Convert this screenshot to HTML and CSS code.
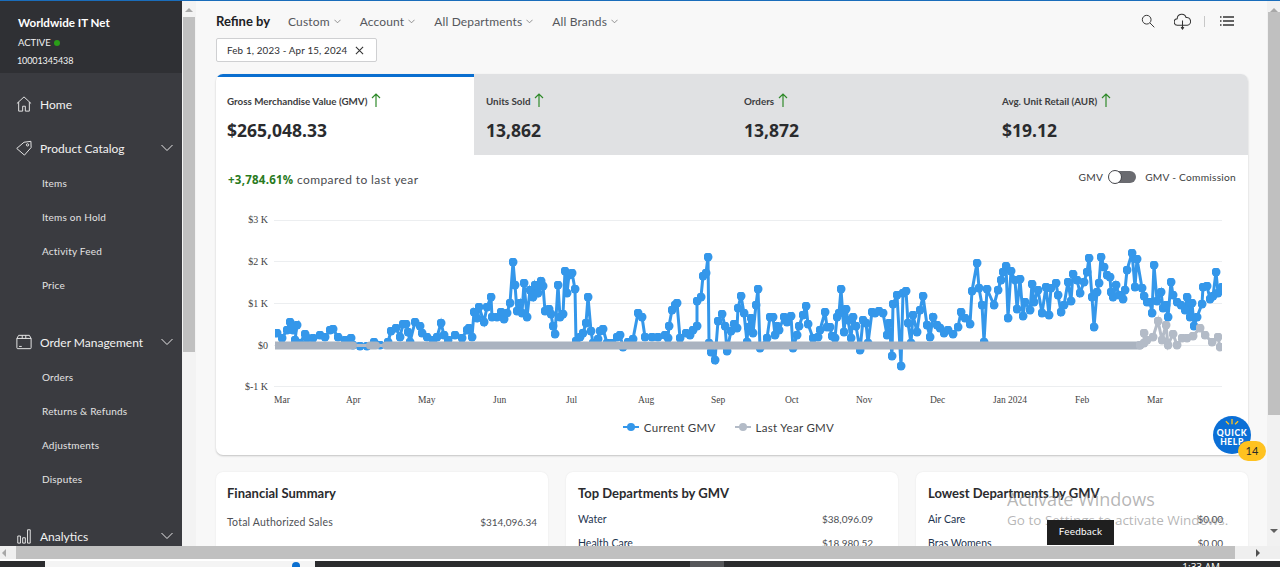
FILE: index.html
```html
<!DOCTYPE html>
<html lang="en">
<head>
<meta charset="utf-8">
<title>Seller Center Analytics</title>
<link rel="stylesheet" href="styles.css">
</head>
<body>
<div class="window">
  <aside class="sidebar">
    <header class="account">
      <div class="account-name">Worldwide IT Net</div>
      <div class="account-status">ACTIVE <span class="status-dot"></span></div>
      <div class="account-id">10001345438</div>
    </header>
    <nav class="nav">
      <a class="nav-main nav-home">
        <svg class="nav-icon" viewBox="0 0 18 18"><path d="M1 8.500 9 1l8 7.500M3 6.800V17h4.500v-5.500h3V17H15V6.800"/></svg>
        <span>Home</span>
      </a>
      <a class="nav-main">
        <svg class="nav-icon" viewBox="0 0 18 18"><path d="M.8 9.500 9 2.500l7.800-1 .2 7-7.500 8.500z"/><circle cx="13" cy="5.500" r="1.300"/></svg>
        <span>Product Catalog</span>
        <svg class="nav-chev" viewBox="0 0 12 8"><path d="M.5 1 6 6.500 11.500 1"/></svg>
      </a>
      <a class="nav-sub">Items</a>
      <a class="nav-sub">Items on Hold</a>
      <a class="nav-sub">Activity Feed</a>
      <a class="nav-sub">Price</a>
      <a class="nav-main nav-group">
        <svg class="nav-icon" viewBox="0 0 18 18"><path d="M3 1.500h12l2 3.500v10.500a1 1 0 0 1-1 1H2a1 1 0 0 1-1-1V5zM1 5h16M7 1.500V5M11 1.500V5M3.500 14h3"/></svg>
        <span>Order Management</span>
        <svg class="nav-chev" viewBox="0 0 12 8"><path d="M.5 1 6 6.500 11.500 1"/></svg>
      </a>
      <a class="nav-sub">Orders</a>
      <a class="nav-sub">Returns &amp; Refunds</a>
      <a class="nav-sub">Adjustments</a>
      <a class="nav-sub">Disputes</a>
      <a class="nav-main nav-group">
        <svg class="nav-icon" viewBox="0 0 18 18"><path d="M2 9h3v8H2zM7.500 11h3v6h-3zM13 2h3v15h-3z"/></svg>
        <span>Analytics</span>
        <svg class="nav-chev" viewBox="0 0 12 8"><path d="M.5 1 6 6.500 11.500 1"/></svg>
      </a>
    </nav>
  </aside>

  <div class="vbar vbar-side">
    <span class="arrow-up"></span>
    <div class="vthumb vthumb-side"></div>
  </div>

  <main class="main">
    <div class="topbar">
      <div class="filters">
        <strong class="refine">Refine by</strong>
        <span class="filter">Custom <svg class="mini-chev" viewBox="0 0 8 5"><path d="M.5.500 4 4 7.500.5"/></svg></span>
        <span class="filter">Account <svg class="mini-chev" viewBox="0 0 8 5"><path d="M.5.500 4 4 7.500.5"/></svg></span>
        <span class="filter">All Departments <svg class="mini-chev" viewBox="0 0 8 5"><path d="M.5.500 4 4 7.500.5"/></svg></span>
        <span class="filter">All Brands <svg class="mini-chev" viewBox="0 0 8 5"><path d="M.5.500 4 4 7.500.5"/></svg></span>
      </div>
      <div class="tools">
        <svg class="tool tool-search" viewBox="0 0 16 16"><circle cx="6.500" cy="6.500" r="5"/><path d="m10.200 10.200 5 5"/></svg>
        <svg class="tool tool-cloud" viewBox="0 0 18 18"><path d="M5 13H4a3.500 3.500 0 0 1-.6-7A4.800 4.800 0 0 1 12.800 4.800 4.100 4.100 0 0 1 14 13z"/><path d="M9 8v9M7.500 15 9 17l1.500-2"/></svg>
        <span class="tool-sep"></span>
        <svg class="tool tool-list" viewBox="0 0 14 10"><path d="M3 1h11M3 5h11M3 9h11M0 1h1.500M0 5h1.500M0 9h1.500"/></svg>
      </div>
    </div>

    <div class="chip"><span>Feb 1, 2023 - Apr 15, 2024</span>
      <svg class="chip-x" viewBox="0 0 10 10"><path d="m1 1 8 8M9 1 1 9"/></svg>
    </div>

    <section class="panel">
      <div class="tabs">
        <div class="tab tab-active">
          <div class="tab-label">Gross Merchandise Value (GMV) <svg class="up" viewBox="0 0 10 14"><path d="M5 14V1M1 5l4-4 4 4"/></svg></div>
          <div class="tab-value">$265,048.33</div>
        </div>
        <div class="tab">
          <div class="tab-label">Units Sold <svg class="up" viewBox="0 0 10 14"><path d="M5 14V1M1 5l4-4 4 4"/></svg></div>
          <div class="tab-value">13,862</div>
        </div>
        <div class="tab">
          <div class="tab-label">Orders <svg class="up" viewBox="0 0 10 14"><path d="M5 14V1M1 5l4-4 4 4"/></svg></div>
          <div class="tab-value">13,872</div>
        </div>
        <div class="tab">
          <div class="tab-label">Avg. Unit Retail (AUR) <svg class="up" viewBox="0 0 10 14"><path d="M5 14V1M1 5l4-4 4 4"/></svg></div>
          <div class="tab-value">$19.12</div>
        </div>
      </div>

      <div class="compare-row">
        <div class="compare"><b class="pct">+3,784.61%</b> compared to last year</div>
        <div class="switch-row">
          <span>GMV</span>
          <span class="switch"><span class="knob"></span></span>
          <span>GMV - Commission</span>
        </div>
      </div>

      <svg class="chart" viewBox="216 200 1032 215" width="1032" height="215">
        <defs>
          <marker id="dot" viewBox="0 0 9 9" refX="4.500" refY="4.500" markerWidth="9" markerHeight="9" markerUnits="userSpaceOnUse"><circle cx="4.500" cy="4.500" r="4.500" fill="#3497ea"/></marker>
          <marker id="dot-grey" viewBox="0 0 9 9" refX="4.500" refY="4.500" markerWidth="9" markerHeight="9" markerUnits="userSpaceOnUse"><circle cx="4.500" cy="4.500" r="4.500" fill="#b3bbc7"/></marker>
          <clipPath id="plot"><rect x="275" y="205" width="947" height="175"/></clipPath>
        </defs>
        <g class="grid">
          <path d="M274 220.500H1222M274 261.500H1222M274 303.500H1222M274 345.500H1222M274 386.500H1222"/>
        </g>
        <g class="y-labels">
          <text x="268" y="223">$3 K</text>
          <text x="268" y="265">$2 K</text>
          <text x="268" y="307">$1 K</text>
          <text x="268" y="349">$0</text>
          <text x="268" y="390">$-1 K</text>
        </g>
        <g class="x-labels">
          <text x="274" y="403">Mar</text><text x="346" y="403">Apr</text><text x="418" y="403">May</text><text x="493" y="403">Jun</text><text x="566" y="403">Jul</text><text x="638" y="403">Aug</text><text x="711" y="403">Sep</text><text x="785" y="403">Oct</text><text x="856" y="403">Nov</text><text x="930" y="403">Dec</text><text x="993" y="403">Jan 2024</text><text x="1075" y="403">Feb</text><text x="1147" y="403">Mar</text>
        </g>
        <g clip-path="url(#plot)">
          <polyline class="line-current" marker-start="url(#dot)" marker-mid="url(#dot)" marker-end="url(#dot)" points="275,333 277,333 282,338 287,330 290,322 293,330 297,325 295,340 300,343 305,334 307,338 313,338 320,335 325,337 330,330 333,329 338,337 345,340 351,338 353,345 360,346 367,346 374,342 380,345 388,342 391,331 396,328 400,337 403,324 406,324 408,332 410,342 415,322 420,326 422,333 427,337 433,340 437,337 441,323 444,335 448,340 455,335 462,338 467,330 469,328 472,337 474,312 477,318 479,307 484,322 487,307 491,297 492,317 497,317 501,312 504,319 507,313 510,303 513,262 515,285 517,311 520,303 522,313 524,283 527,317 530,290 533,297 535,285 538,293 541,281 543,286 545,311 549,309 551,314 553,326 555,334 558,285 560,317 563,314 565,271 567,293 569,275 572,273 575,289 576,341 580,337 583,333 586,323 588,297 591,331 593,343 598,339 600,331 603,329 607,343 612,343 617,337 620,335 623,347 628,342 633,339 638,313 642,317 645,337 652,337 658,337 665,335 668,338 669,326 672,310 675,305 677,303 680,338 686,333 690,335 693,330 697,326 697,301 701,297 703,276 706,273 708,257 709,343 711,352 715,360 718,321 722,314 725,326 727,351 731,331 734,324 737,328 738,308 741,296 744,313 747,342 748,327 751,318 753,333 756,305 758,289 760,348 767,338 770,317 773,317 775,335 777,326 779,330 784,317 787,322 791,316 793,348 797,335 799,326 803,315 806,306 808,324 813,338 818,337 820,330 825,312 827,327 830,327 832,336 835,338 837,317 839,313 841,289 844,332 846,309 848,320 851,338 853,317 856,326 860,350 863,320 866,323 868,343 872,312 875,313 879,311 883,313 887,335 889,323 892,356 893,304 897,295 901,366 903,293 906,291 908,323 911,343 913,315 917,332 920,310 923,296 927,325 930,337 933,317 937,325 940,328 944,333 948,330 953,334 958,327 961,312 965,318 970,324 972,291 977,263 979,288 982,305 984,342 987,289 994,305 998,290 1001,280 1003,272 1006,266 1008,318 1011,271 1015,280 1017,309 1020,279 1023,316 1025,302 1030,310 1032,284 1034,302 1038,290 1042,313 1046,287 1049,315 1051,288 1056,283 1058,295 1061,312 1064,305 1068,282 1071,301 1073,274 1077,280 1080,293 1084,282 1087,272 1089,258 1092,297 1094,327 1097,292 1099,283 1101,257 1104,267 1107,275 1110,277 1111,292 1113,297 1116,285 1119,295 1123,299 1125,290 1127,270 1132,253 1135,287 1137,259 1142,288 1144,296 1147,302 1150,302 1152,313 1154,265 1157,301 1161,292 1163,308 1166,305 1168,317 1171,282 1173,295 1177,302 1181,305 1185,310 1187,297 1190,317 1192,303 1194,326 1197,317 1202,304 1203,287 1207,286 1210,299 1213,296 1216,272 1218,293 1222,287"/>
          <path class="band-thin" d="M275 345.500H1140"/>
          <path class="band" d="M275 345.500H353M370 345.500H376M386 345.500H1140"/>
          <polyline class="line-last" marker-mid="url(#dot-grey)" marker-end="url(#dot-grey)" points="1138,345 1140,345 1144,343 1144,333 1147,340 1153,337 1158,321 1162,340 1166,325 1168,345 1173,334 1177,345 1182,338 1187,338 1193,336 1200,328 1205,335 1212,342 1218,337 1220,347"/>
        </g>
      </svg>

      <div class="legend">
        <span class="legend-item"><span class="swatch swatch-current"></span>Current GMV</span>
        <span class="legend-item"><span class="swatch swatch-last"></span>Last Year GMV</span>
      </div>
    </section>

    <div class="cards">
      <section class="card card-first">
        <h3>Financial Summary</h3>
        <div class="row row-plain"><span class="row-name">Total Authorized Sales</span><span class="row-value">$314,096.34</span></div>
      </section>
      <section class="card card-dept">
        <h3>Top Departments by GMV</h3>
        <div class="row"><span class="dept">Water</span><span class="row-value">$38,096.09</span></div>
        <div class="row"><span class="dept">Health Care</span><span class="row-value">$18,980.52</span></div>
      </section>
      <section class="card card-dept">
        <h3>Lowest Departments by GMV</h3>
        <div class="row"><span class="dept">Air Care</span><span class="row-value">$0.00</span></div>
        <div class="row"><span class="dept">Bras Womens</span><span class="row-value">$0.00</span></div>
      </section>
    </div>

    <div class="quick-help">
      <svg class="sparks" viewBox="0 0 20 8"><path d="M10 0v6M3 2.500l3.500 3.500M17 2.500 13.500 6"/></svg>
      <span>QUICK</span><span>HELP</span>
    </div>
    <div class="quick-badge">14</div>
    <div class="watermark">
      <div class="wm-title">Activate Windows</div>
      <div class="wm-sub">Go to Settings to activate Windows.</div>
    </div>
    <div class="feedback">Feedback</div>
  </main>

  <div class="vbar vbar-page">
    <span class="arrow-up"></span>
    <div class="vthumb vthumb-page"></div>
    <span class="arrow-down"></span>
  </div>
</div>

<div class="hbar">
  <span class="arrow-left"></span>
  <div class="hthumb"></div>
  <span class="arrow-right"></span>
</div>

<footer class="taskbar">
  <div class="task-search"><span class="task-dot"></span></div>
  <div class="task-app"></div>
  <div class="task-clock">1:33 AM</div>
</footer>
</body>
</html>
```

FILE: styles.css
```css
* { box-sizing: border-box; }
html, body { margin: 0; height: 567px; overflow: hidden; }
body { font-family: Lato, "Open Sans", sans-serif; color: #2e2f32; background: #fff; display: flex; flex-direction: column; }

.window { display: flex; height: 546px; border-top: 1px solid #1a6dbb; flex: none; overflow: hidden; }

/* Sidebar */
.sidebar { width: 182px; flex: none; background: #3a3b40; color: #f2f2f2; overflow: hidden; }
.account { height: 72px; background: #2f3034; padding: 14px 0 0 18px; }
.account-name { font-size: 11.600px; font-weight: 700; line-height: 15px; color: #fff; }
.account-status { font-size: 9.500px; line-height: 12px; margin-top: 7px; display: flex; align-items: center; gap: 3px; }
.status-dot { width: 6px; height: 6px; border-radius: 50%; background: #2a9d18; }
.account-id { font-size: 9px; line-height: 12px; margin-top: 6px; margin-left: -1px; letter-spacing: -.1px; }
.nav { padding-top: 15px; display: flex; flex-direction: column; }
.nav-main { height: 34px; display: flex; align-items: center; padding: 0 0 2px 16px; font-size: 12px; flex: none; }
.nav-home { margin-bottom: 10px; }
.nav-group { margin-top: 24px; }
.nav-icon { width: 16px; height: 16px; margin-right: 8px; fill: none; stroke: #e6e6e6; stroke-width: 1.100; flex: none; }
.nav-chev { width: 12px; height: 8px; margin-left: auto; margin-right: 9px; fill: none; stroke: #e6e6e6; stroke-width: 1; flex: none; }
.nav-sub { height: 34px; display: flex; align-items: center; padding: 0 0 1px 42px; font-size: 10px; letter-spacing: .2px; color: #e4e4e4; flex: none; }

/* Scrollbars */
.vbar { width: 14px; flex: none; background: #f1f1f1; position: relative; display: flex; flex-direction: column; align-items: center; }
.vbar-side { background: #f3f3f3; }
.vthumb { width: 12px; background: #c0c0c0; }
.vthumb-side { height: 335px; margin-top: 5px; }
.vthumb-page { height: 403px; margin-top: 0; }
.vbar-page { width: 13px; }
.arrow-up { width: 0; height: 0; border: 4px solid transparent; border-top: 0; border-bottom: 4px solid #a8a8a8; margin-top: 7px; }
.arrow-down { width: 0; height: 0; border: 4px solid transparent; border-bottom: 0; border-top: 4px solid #606060; margin-top: 114px; }
.hbar { height: 13px; background: #efefef; display: flex; align-items: center; flex: none; }
.hthumb { width: 1219px; height: 13px; background: #c0c0c0; margin-left: 10px; flex: none; }
.arrow-left { width: 0; height: 0; border: 4px solid transparent; border-left: 0; border-right: 4px solid #a8a8a8; margin-left: 2px; flex: none; }
.arrow-right { width: 0; height: 0; border: 4px solid transparent; border-right: 0; border-left: 4px solid #505050; margin-left: 21px; flex: none; }

/* Main */
.main { flex: 1; min-width: 0; background: #f8f8f8; padding: 0 19px 0 20px; position: relative; overflow: hidden; }
.topbar { height: 37px; display: flex; align-items: center; justify-content: space-between; padding-top: 3px; }
.filters { display: flex; align-items: center; }
.refine { font-size: 13px; font-weight: 700; color: #202124; margin-right: 18px; }
.filter { font-size: 12px; color: #55575c; letter-spacing: .14px; margin-right: 19px; display: flex; align-items: center; gap: 4px; }
.mini-chev { width: 7px; height: 5px; fill: none; stroke: #777; stroke-width: .9; }
.tools { display: flex; align-items: center; padding-right: 14px; }
.tool { fill: none; stroke: #333; stroke-width: 1.100; flex: none; }
.tool-search { width: 14px; height: 14px; margin-right: 19px; }
.tool-cloud { width: 17px; height: 17px; margin-right: 13px; }
.tool-sep { width: 1px; height: 11px; background: #c8c8c8; margin-right: 15px; }
.tool-list { width: 14px; height: 10px; stroke-width: 1.300; }

.chip { width: 161px; height: 24px; background: #fff; border: 1px solid #cfd0d2; border-radius: 2px; display: flex; align-items: center; justify-content: space-between; padding: 0 12px 0 10px; font-size: 9.800px; color: #2e2f32; letter-spacing: .15px; white-space: nowrap; }
.chip-x { width: 9px; height: 9px; fill: none; stroke: #333; stroke-width: 1.200; flex: none; }

.panel { margin-top: 12px; height: 381px; background: #fff; border-radius: 7px; box-shadow: 0 1px 2px rgba(0,0,0,.22); overflow: hidden; }
.tabs { display: flex; height: 81px; background: #e0e1e3; }
.tab { width: 258px; padding: 19px 0 0 12px; flex: none; }
.tab-active { background: #fff; border-top: 3px solid #0a6fd0; padding: 16px 0 0 11px; }
.tab-label { font-size: 9.800px; font-weight: 700; color: #3c3d40; line-height: 16px; display: flex; align-items: center; gap: 4px; height: 16px; }
.up { width: 10px; height: 14px; fill: none; stroke: #2f8a2a; stroke-width: 1.200; margin-top: -3px; }
.tab-value { font-family: "Noto Sans", "Open Sans", sans-serif; font-size: 17.500px; font-weight: 700; color: #2a2b2e; line-height: 24px; margin-top: 9px; }
.compare-row { height: 45px; display: flex; justify-content: space-between; padding: 15px 12px 0 12px; }
.compare { font-size: 12px; line-height: 20px; color: #4a4b4f; letter-spacing: .4px; }
.pct { color: #2a7a1d; font-family: "Open Sans", sans-serif; font-size: 11.500px; letter-spacing: .25px; }
.switch-row { display: flex; align-items: center; height: 14px; font-size: 10.200px; color: #3c3d40; letter-spacing: .25px; gap: 6px; }
.switch { width: 27px; height: 12px; border-radius: 6px; background: #6a6b70; position: relative; margin-right: 3px; }
.knob { position: absolute; left: -1px; top: -1px; width: 14px; height: 14px; border-radius: 50%; background: #fff; border: 1px solid #44454a; }

.chart { display: block; }
.grid path { stroke: #eceef0; stroke-width: 1; fill: none; }
.y-labels text { font-family: "Liberation Serif", serif; font-size: 10px; fill: #444; text-anchor: end; }
.x-labels text { font-family: "Liberation Serif", serif; font-size: 9.500px; fill: #444; }
.line-current { fill: none; stroke: #3497ea; stroke-width: 3; }
.line-last { fill: none; stroke: #b3bbc7; stroke-width: 3; }
.band { fill: none; stroke: #aab3c0; stroke-width: 8; stroke-linecap: round; }
.band-thin { fill: none; stroke: #b3bbc7; stroke-width: 3; }

.legend { display: flex; justify-content: center; gap: 19px; height: 24px; align-items: center; padding-right: 7px; font-size: 11.500px; color: #3c3d40; letter-spacing: .3px; }
.legend-item { display: flex; align-items: center; gap: 5px; }
.swatch { width: 16px; height: 2px; position: relative; }
.swatch::after { content: ""; position: absolute; left: 4px; top: -3px; width: 8px; height: 8px; border-radius: 50%; background: inherit; }
.swatch-current { background: #3497ea; }
.swatch-last { background: #b3bbc7; }

.cards { display: grid; grid-template-columns: repeat(3, 332px); gap: 18px; margin-top: 17px; }
.card { background: #fff; border-radius: 7px; height: 120px; padding: 14px 11px 14px 12px; box-shadow: 0 0 2px rgba(0,0,0,.08); }
.card-first { padding-left: 11px; }
.card-dept { padding-right: 25px; }
.card h3 { margin: 0; font-size: 13px; line-height: 14px; font-weight: 700; color: #2a2b2e; white-space: nowrap; }
.row { display: flex; justify-content: space-between; font-size: 10.500px; line-height: 24px; color: #4e5055; }
.row-value { font-size: 10px; }
.card h3 + .row { margin-top: 7px; }
.card h3 + .row-plain { margin-top: 10px; }
.row-name { letter-spacing: .2px; }
.dept { color: #1e3550; }

/* Overlays */
.quick-help { position: absolute; left: 1017px; top: 415px; width: 38px; height: 38px; border-radius: 50%; background: #0b6fd6; color: #fff; display: flex; flex-direction: column; align-items: center; font-size: 8.500px; font-weight: 900; line-height: 9px; letter-spacing: .6px; padding-top: 3px; }
.sparks { width: 18px; height: 7px; fill: none; stroke: #ffc220; stroke-width: 1.500; flex: none; margin-bottom: 3px; }
.quick-badge { position: absolute; left: 1042px; top: 440px; width: 28px; height: 20px; border-radius: 10px; background: #ffc220; color: #2a2a2a; font-size: 11px; text-align: center; line-height: 20px; }
.watermark { position: absolute; left: 811px; top: 487px; color: rgba(120,120,120,.55); font-family: "Open Sans", sans-serif; white-space: nowrap; }
.wm-title { font-size: 18px; line-height: 22px; }
.wm-sub { font-size: 13.500px; line-height: 18px; margin-top: 1px; }
.feedback { position: absolute; left: 851px; top: 519px; width: 67px; height: 25px; background: #1f1f1f; color: #fff; font-size: 10px; text-align: center; line-height: 22px; letter-spacing: .2px; }

/* Taskbar */
.taskbar { flex: none; margin-top: 2px; height: 6px; background: #2b2c2e; position: relative; display: flex; overflow: hidden; }
.task-search { margin-left: 45px; width: 270px; background: #f4f4f4; position: relative; }
.task-dot { position: absolute; left: 247px; top: 1px; width: 8px; height: 8px; border-radius: 50%; background: #0a6fd0; }
.task-app { width: 34px; background: #56575a; margin-left: 375px; }
.task-clock { margin-left: auto; margin-right: 60px; color: #fff; font-family: "Open Sans", sans-serif; font-size: 10px; line-height: 12px; }
```
